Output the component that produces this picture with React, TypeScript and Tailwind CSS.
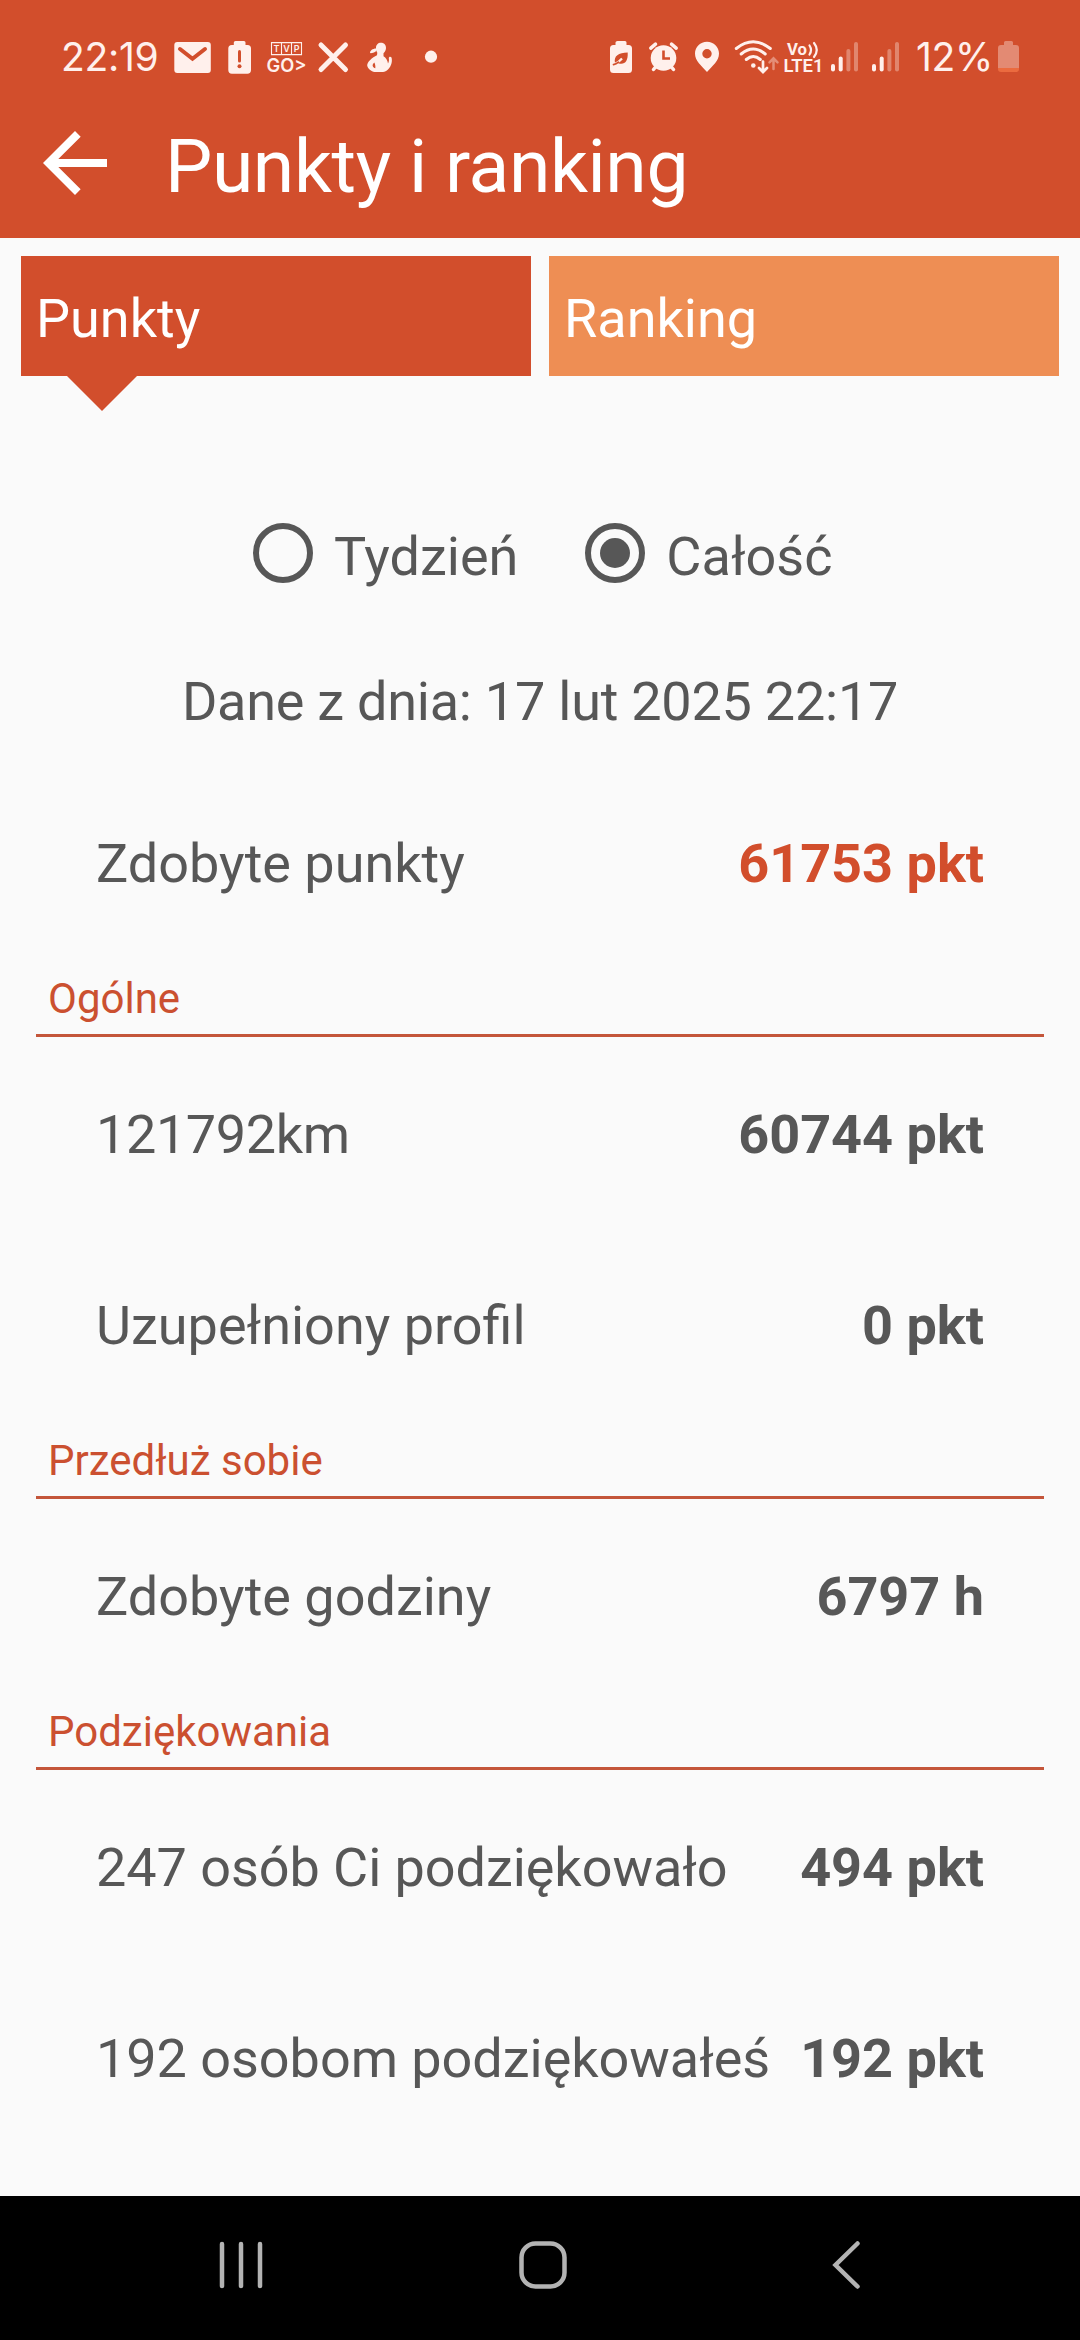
import type { ReactNode } from "react";

type Entry = { label: string; value: string; accent?: boolean; tracking?: string };
type Group = { title: string; entries: Entry[] };

const groups: Group[] = [
  {
    title: "Ogólne",
    entries: [
      { label: "121792km", value: "60744 pkt", tracking: "tracking-[-0.4px]" },
      { label: "Uzupełniony profil", value: "0 pkt" },
    ],
  },
  {
    title: "Przedłuż sobie",
    entries: [{ label: "Zdobyte godziny", value: "6797 h" }],
  },
  {
    title: "Podziękowania",
    entries: [
      { label: "247 osób Ci podziękowało", value: "494 pkt", tracking: "tracking-[-0.06px]" },
      { label: "192 osobom podziękowałeś", value: "192 pkt", tracking: "tracking-[-0.04px]" },
    ],
  },
];

// Status icons share one 42px high strip, x is the left edge on that strip
function Glyph({ x, w, children }: { x: number; w: number; children: ReactNode }) {
  return (
    <svg
      width={w}
      height={42}
      viewBox={`${x} 36 ${w} 42`}
      fill="currentColor"
      className="shrink-0"
      aria-hidden
    >
      {children}
    </svg>
  );
}

function SignalBars({ x }: { x: number }) {
  return (
    <>
      <rect x={x} y="64" width="4" height="7.5" rx="2" />
      <rect x={x + 7.7} y="56.5" width="4" height="15" rx="2" />
      <rect x={x + 15.4} y="49" width="4" height="22.5" rx="2" opacity="0.35" />
      <rect x={x + 23} y="42" width="4" height="29.5" rx="2" opacity="0.35" />
    </>
  );
}

function StatusBar() {
  return (
    <div className="flex h-28 items-start pt-9 font-[Inter,sans-serif] text-[#fff0ec]">
      <span className="w-[170px] shrink-0 pl-[61px] text-[39px] leading-[42px] tracking-[-0.3px]">
        22:19
      </span>
      <Glyph x={170} w={50}>
        <rect x="174.3" y="42" width="36.5" height="31" rx="3" />
        <path
          d="M180 49l12.5 9.8L205 49"
          fill="none"
          stroke="#d24e2c"
          strokeWidth="4"
          strokeLinecap="round"
        />
      </Glyph>
      <Glyph x={220} w={40}>
        <path d="M235.5 41h8.5q1.5 0 1.5 1.5V45h2q3.5 0 3.5 3.5V70q0 3.7-3.7 3.7H232q-3.7 0-3.7-3.7V48.500q0-3.500 3.500-3.500h2v-2.500q0-1.500 1.700-1.500z" />
        <path d="M239.500 51.500v9.500" stroke="#d24e2c" strokeWidth="3" strokeLinecap="round" />
        <circle cx="239.500" cy="66.300" r="2" fill="#d24e2c" />
      </Glyph>
      <Glyph x={260} w={52}>
        <path
          d="M271.500 42.600h30v12h-30zM281.500 42.600v12M291.500 42.600v12"
          fill="none"
          stroke="currentColor"
          strokeWidth="1.100"
        />
        <text x="276.500" y="52.100" fontSize="9" fontWeight="600" textAnchor="middle">T</text>
        <text x="286.500" y="52.100" fontSize="9" fontWeight="600" textAnchor="middle">V</text>
        <text x="296.700" y="52.100" fontSize="9" fontWeight="600" textAnchor="middle">P</text>
        <text x="266.500" y="71.500" fontSize="18.500" fontWeight="600" textLength="40" lengthAdjust="spacingAndGlyphs">
          GO&gt;
        </text>
      </Glyph>
      <Glyph x={312} w={45}>
        <path
          d="M321 45l24.500 24.500M345.500 45L321 69.500"
          stroke="currentColor"
          strokeWidth="5"
          strokeLinecap="round"
        />
      </Glyph>
      <Glyph x={357} w={48}>
        {/* ponytail, head, torso with the left arm bent, raised right arm */}
        <path d="M377 48.500c-3.500-.6-7 2-7 4 0 1 1.500.6 3.200.3 1.800-.5 2.800-1.500 3.800-3z" />
        <path d="M376 48c0-3.200 2-5.200 5-5.200 3.200 0 5 2.200 5 5.200 0 2.300-1.200 4-2.500 5.200v3c2.500 1.500 4 4.300 4.500 7.300 1.200-1.800 1-3.500.8-5.200-.1-1.600 1.700-2.300 2.700-.8.9 3.500.4 8-3.500 12-1.500 1.500-3.200 2.500-5 2.500h-8.500c-3-.5-7-3.500-7.300-6.500-.2-3.500 5-8 9.800-10.300l.3-2.500c-.8-1.200-1.300-2.700-1.300-4.700z" />
        <path d="M374.300 62.500c-1.500 1.500-2 2.500-1.500 3.700.4.900 1.400 1.600 2.500 2 .3-2-.1-4-1-5.700z" fill="#d24e2c" />
      </Glyph>
      <Glyph x={405} w={195}>
        <circle cx="431" cy="56.700" r="6.100" />
      </Glyph>
      <Glyph x={600} w={42}>
        <path d="M617.500 41h7.500q1.500 0 1.500 1.500V45h2q3.500 0 3.500 3.500v21q0 3.500-3.500 3.500h-15q-3.500 0-3.500-3.500v-21q0-3.500 3.500-3.500h2v-2.500q0-1.500 2-1.500z" />
        <path d="M615 63c-1.500-7 3.500-10.500 12.700-10.500.4 7.500-2 11.300-6.500 11.300-1.800 0-3-.4-4.200-1.300z" fill="#d24e2c" />
        <path d="M615.500 63.500q3.500-1.500 6.500-5" fill="none" stroke="#fff0ec" strokeWidth="2.200" />
        <path d="M613.500 64.700q2.500-.5 5-2.500" fill="none" stroke="#d24e2c" strokeWidth="1.700" strokeLinecap="round" />
      </Glyph>
      <Glyph x={642} w={44}>
        <circle cx="663.500" cy="58" r="12.800" />
        <path
          d="M650.800 48.200l4.700-4M676.200 48.200l-4.700-4M653.500 69.500l2.500-3M673.500 69.500l-2.500-3"
          stroke="currentColor"
          strokeWidth="3.500"
          strokeLinecap="round"
        />
        <path d="M663.500 50.500v8h6.500" fill="none" stroke="#d24e2c" strokeWidth="2.600" />
      </Glyph>
      <Glyph x={686} w={42}>
        <path
          fillRule="evenodd"
          d="M707 41.700c-6.700 0-12 5.200-12 11.800 0 7.500 6.500 12 12 18.500 5.500-6.500 12-11 12-18.500 0-6.600-5.300-11.800-12-11.800zm0 7.300a4.700 4.700 0 110 9.400 4.700 4.700 0 010-9.400z"
        />
      </Glyph>
      <Glyph x={728} w={53}>
        <g fill="none" stroke="currentColor" strokeWidth="3" strokeLinecap="round">
          <path d="M736.300 48.500q17-13.500 34 0M741.200 54q12-10 24 0M746.300 59.500q7-6 14 0" />
          <path d="M763 61.500v10M759 68l4 4 4-4" strokeWidth="2.700" />
          <path d="M773.500 69V59M769.500 62.300l4-4 4 4" strokeWidth="2.500" opacity="0.4" />
        </g>
        <circle cx="753.300" cy="65.500" r="2.300" />
      </Glyph>
      <Glyph x={781} w={45}>
        <text x="787" y="54.700" fontFamily="Roboto, sans-serif" fontSize="17" fontWeight="700" textLength="20" lengthAdjust="spacingAndGlyphs">
          Vo
        </text>
        <path
          d="M809.500 45.500q3 4.500 0 9M814 43q5.500 7 0 14"
          fill="none"
          stroke="currentColor"
          strokeWidth="2.200"
          strokeLinecap="round"
        />
        <text x="783.500" y="72" fontFamily="Roboto, sans-serif" fontSize="18.500" fontWeight="600" textLength="40" lengthAdjust="spacingAndGlyphs">
          LTE1
        </text>
      </Glyph>
      <Glyph x={826} w={87}>
        <SignalBars x={831} />
        <SignalBars x={872} />
      </Glyph>
      <span className="w-[80px] shrink-0 pl-[3px] text-[39px] leading-[42px] tracking-[-0.3px]">
        12%
      </span>
      <Glyph x={993} w={32}>
        <path
          d="M1005.500 41h6q1.500 0 1.500 1.500V45h3q3 0 3 3v20.500H998V48q0-3 3-3h3v-2.500q0-1.500 1.500-1.500z"
          fill="#e38a73"
        />
        <path d="M998 68h21v1q0 3-3 3h-15q-3 0-3-3z" fill="#eb6b3f" />
      </Glyph>
    </div>
  );
}

function Tab({ label, active = false }: { label: string; active?: boolean }) {
  return (
    <div
      className={
        active
          ? "relative flex h-[120px] flex-1 items-center bg-[#d24e2c] pl-[15px] text-white"
          : "relative flex h-[120px] flex-1 items-center bg-[#ee8e54] pl-[15px] text-white"
      }
    >
      <span className="pt-[5px]">{label}</span>
      {active && (
        <div className="absolute left-[46px] top-full h-[35px] w-[70px] bg-[#d24e2c] [clip-path:polygon(0_0,100%_0,50%_100%)]" />
      )}
    </div>
  );
}

function Radio({ label, checked = false }: { label: string; checked?: boolean }) {
  return (
    <div className="flex items-center gap-[15px]">
      <svg width="72" height="72" viewBox="0 0 24 24" aria-hidden>
        <circle cx="12" cy="12" r="9" fill="none" stroke="currentColor" strokeWidth="2" />
        {checked && <circle cx="12" cy="12" r="5" fill="currentColor" />}
      </svg>
      <span className="pt-[7px]">{label}</span>
    </div>
  );
}

function Row({ label, value, accent = false, tracking }: Entry) {
  return (
    <div className="flex h-[191px] items-center justify-between whitespace-nowrap px-[60px] pt-1">
      <span className={tracking}>{label}</span>
      <span className={accent ? "font-bold text-[#d24e2c]" : "font-bold"}>{value}</span>
    </div>
  );
}

export default function App() {
  return (
    <div className="flex h-[2340px] w-[1080px] flex-col overflow-hidden bg-[#fafafa] font-[Roboto,sans-serif] text-[54px] leading-[63px] text-[#575757]">
      <header className="h-[238px] shrink-0 bg-[#d24e2c]">
        <StatusBar />
        <div className="flex h-[102px] items-center pl-[27px] text-white">
          <svg width="96" height="96" viewBox="0 0 24 24" fill="currentColor" aria-hidden>
            <path d="M20 11H7.830l5.590-5.590L12 4l-8 8 8 8 1.410-1.410L7.830 13H20v-2z" />
          </svg>
          <h1 className="pl-[42px] pt-[6px] text-[75px] leading-[88px] tracking-[-0.4px]">
            Punkty i ranking
          </h1>
        </div>
      </header>

      <main className="flex-1">
        <div className="flex gap-[18px] px-[21px] pt-[18px]">
          <Tab label="Punkty" active />
          <Tab label="Ranking" />
        </div>

        <div className="mt-[141px] flex h-[72px] gap-[61px] pl-[247px]">
          <Radio label="Tydzień" />
          <Radio label="Całość" checked />
        </div>

        <p className="mt-[81px] text-center tracking-[-0.24px]">Dane z dnia: 17 lut 2025 22:17</p>

        <div className="mt-[33px] px-9">
          <Row label="Zdobyte punkty" value="61753 pkt" accent />
          {groups.map((group) => (
            <section key={group.title}>
              <h2 className="h-20 border-b-[3px] border-[#c4563a] pl-3 pt-[17px] text-[42px] leading-[50px] text-[#cb5030]">
                {group.title}
              </h2>
              {group.entries.map((entry) => (
                <Row key={entry.label} {...entry} />
              ))}
            </section>
          ))}
        </div>
      </main>

      <nav className="flex h-36 shrink-0 items-center bg-black text-[#b3b3b3]">
        <svg
          width="1080"
          height="60"
          viewBox="0 0 1080 60"
          fill="none"
          stroke="currentColor"
          strokeWidth="4.500"
          strokeLinecap="round"
          aria-hidden
        >
          <path d="M222 6v42M241 6v42M260 6v42" />
          <rect x="521.500" y="5.500" width="43" height="43" rx="14" />
          <path d="M857.500 5.500L835.500 27l22 21.500" />
        </svg>
      </nav>
    </div>
  );
}
